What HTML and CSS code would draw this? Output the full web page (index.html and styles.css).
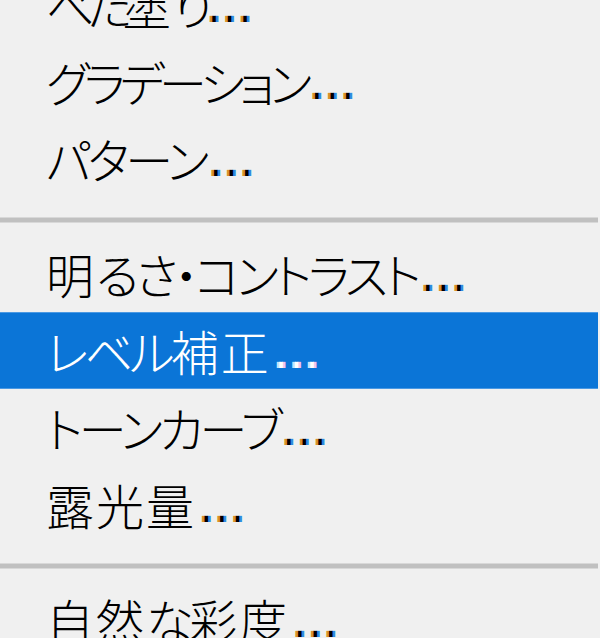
FILE: index.html
```html
<!DOCTYPE html>
<html lang="ja">
<head>
<meta charset="utf-8">
<link rel="stylesheet" href="styles.css">
</head>
<body>
<div class="menu">
  <div class="group group-first">
    <div class="item"><span class="kana tighter">べた</span>塗<span class="kana tighter">り</span><span class="dots">...</span></div>
    <div class="item"><span class="kana tight">グラデーション</span><span class="dots">...</span></div>
    <div class="item"><span class="kana">パターン</span><span class="dots">...</span></div>
  </div>
  <div class="sep"></div>
  <div class="group">
    <div class="item">明<span class="kana">るさ・コントラスト</span><span class="dots">...</span></div>
    <div class="item active"><span class="kana">レベル</span>補正<span class="dots">...</span></div>
    <div class="item"><span class="kana">トーンカーブ</span><span class="dots">...</span></div>
    <div class="item">露光量<span class="dots">...</span></div>
  </div>
  <div class="sep"></div>
  <div class="group">
    <div class="item">自然<span class="kana">な</span>彩度<span class="dots">...</span></div>
  </div>
</div>
</body>
</html>
```
FILE: styles.css
```css
html, body {
  margin: 0;
  padding: 0;
  background: #f0f0f0;
  overflow: hidden;
  height: 638px;
}
.menu {
  width: 598px;
  display: flex;
  flex-direction: column;
  font-family: "Noto Sans CJK JP", "Noto Sans", sans-serif;
  font-size: 48px;
  font-weight: 300;
  font-feature-settings: "palt";
  color: #000;
}
.group-first {
  margin-top: -34px;
}
.item {
  height: 77px;
  line-height: 77px;
  padding-left: 46px;
  letter-spacing: 2px;
  white-space: nowrap;
  box-sizing: border-box;
}
.kana {
  letter-spacing: -3.8px;
}
.kana.tight {
  letter-spacing: -5.5px;
}
.kana.tighter {
  letter-spacing: -9px;
}
.dots {
  display: inline-block;
  font-family: "Liberation Sans", sans-serif;
  font-size: 38px;
  font-weight: 400;
  letter-spacing: 5px;
  margin-left: 5px;
  line-height: 1;
  transform: scaleY(1.5);
  transform-origin: 50% 100%;
  text-shadow: -2.5px 0 #d8902c, 2.5px 0 #2f8ce0;
}
.active {
  background: #0b75d7;
  color: #fff;
  box-shadow: inset 0 1px #4b99e3, inset 0 -1px #4b99e3;
}
.active .dots {
  text-shadow: -2.5px 0 #bfe2ff, 2.5px 0 #f3c6ea;
}
.sep {
  height: 4px;
  margin: 20px 0 12px;
  background: #c0c0c0;
  border-top: 1px solid #d8d8d8;
  border-bottom: 1px solid #d8d8d8;
}
```
